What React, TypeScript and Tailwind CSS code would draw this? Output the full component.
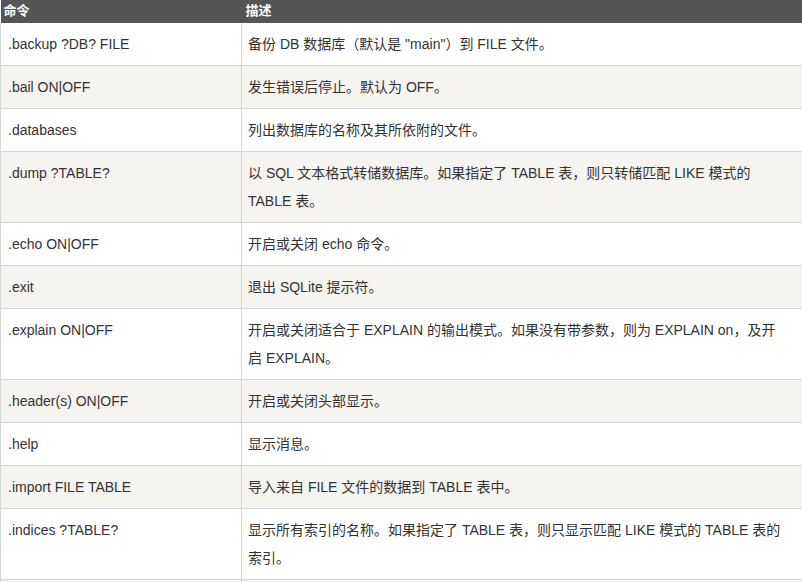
import React from "react";

interface Command {
  cmd: string;
  desc: string[];
}

const commands: Command[] = [
  { cmd: ".backup ?DB? FILE", desc: ["备份 DB 数据库（默认是 \"main\"）到 FILE 文件。"] },
  { cmd: ".bail ON|OFF", desc: ["发生错误后停止。默认为 OFF。"] },
  { cmd: ".databases", desc: ["列出数据库的名称及其所依附的文件。"] },
  {
    cmd: ".dump ?TABLE?",
    desc: ["以 SQL 文本格式转储数据库。如果指定了 TABLE 表，则只转储匹配 LIKE 模式的", "TABLE 表。"],
  },
  { cmd: ".echo ON|OFF", desc: ["开启或关闭 echo 命令。"] },
  { cmd: ".exit", desc: ["退出 SQLite 提示符。"] },
  {
    cmd: ".explain ON|OFF",
    desc: ["开启或关闭适合于 EXPLAIN 的输出模式。如果没有带参数，则为 EXPLAIN on，及开", "启 EXPLAIN。"],
  },
  { cmd: ".header(s) ON|OFF", desc: ["开启或关闭头部显示。"] },
  { cmd: ".help", desc: ["显示消息。"] },
  { cmd: ".import FILE TABLE", desc: ["导入来自 FILE 文件的数据到 TABLE 表中。"] },
  {
    cmd: ".indices ?TABLE?",
    desc: ["显示所有索引的名称。如果指定了 TABLE 表，则只显示匹配 LIKE 模式的 TABLE 表的", "索引。"],
  },
];

export default function App() {
  return (
    <div
      className="w-[802px] h-[582px] overflow-hidden bg-white text-[#333] text-[14px]"
      style={{ fontFamily: '"Liberation Sans", Arial, "Noto Sans CJK SC", sans-serif' }}
    >
      <table className="w-[802px] border-collapse table-fixed">
        <colgroup>
          <col className="w-[241px]" />
          <col />
        </colgroup>
        <thead>
          <tr className="bg-[#555555] text-white">
            <th className="h-[23px] pl-[3px] text-left align-top pt-[3px] text-[13px] font-bold leading-[16px]">
              命令
            </th>
            <th className="h-[23px] pl-[4px] text-left align-top pt-[3px] text-[13px] font-bold leading-[16px]">
              描述
            </th>
          </tr>
        </thead>
        <tbody>
          {commands.map((c, i) => (
            <tr key={i} className={i % 2 === 0 ? "bg-white" : "bg-[#f6f4f0]"}>
              <td className="border-l border-b border-r border-[#d4d4d4] align-top pl-[7px] pr-[6px] pt-[7px] pb-[7px] leading-[28px]">
                {c.cmd}
              </td>
              <td className="border-b border-[#d4d4d4] align-top pl-[6px] pr-[6px] pt-[7px] pb-[7px] leading-[28px] whitespace-nowrap">
                {c.desc.map((line, j) => (
                  <div key={j}>{line}</div>
                ))}
              </td>
            </tr>
          ))}
          {/* next row, cut off by the window edge */}
          <tr className="bg-[#f6f4f0]">
            <td className="border-l border-r border-[#d4d4d4] h-[43px]"></td>
            <td></td>
          </tr>
        </tbody>
      </table>
    </div>
  );
}
